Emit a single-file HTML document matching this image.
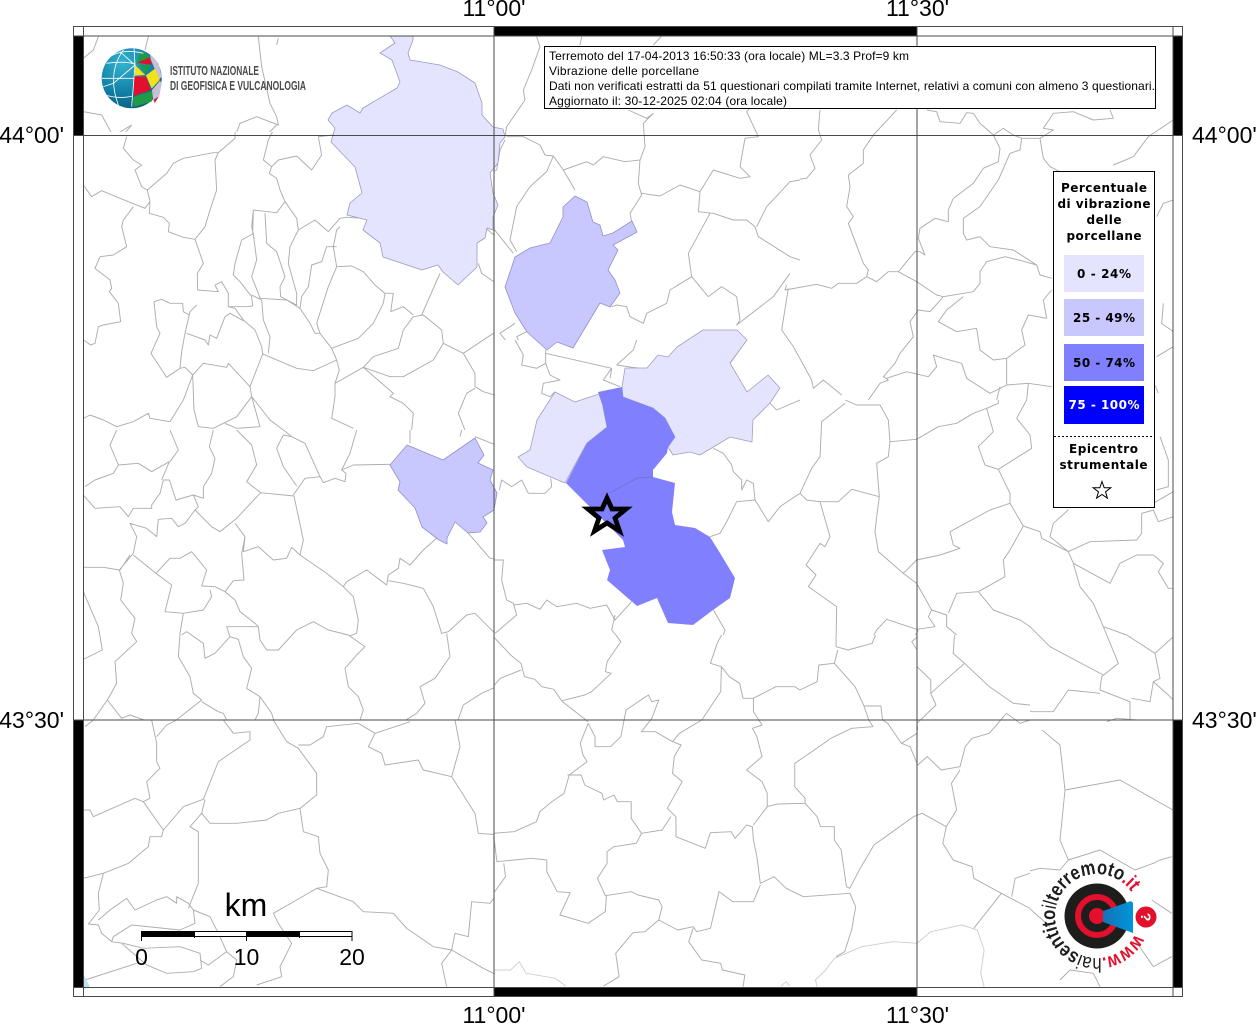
<!DOCTYPE html>
<html><head><meta charset="utf-8"><title>Vibrazione delle porcellane</title>
<style>
html,body{margin:0;padding:0;background:#fff}
svg{display:block}
.b path{fill:none;stroke:#adadad;stroke-width:.95;vector-effect:non-scaling-stroke;stroke-linejoin:round}
.l{font-family:"Liberation Sans",sans-serif;font-size:23px;fill:#000}
.d{font-family:"DejaVu Sans",sans-serif;font-weight:bold;font-size:12px;text-anchor:middle;fill:#000}
.i{font-family:"Liberation Sans",sans-serif;font-size:12px;fill:#000}
.g{font-family:"Liberation Sans Narrow","Liberation Sans",sans-serif;font-size:12.5px;font-weight:bold;fill:#4a4a4a}
</style></head><body>
<svg width="1256" height="1024" viewBox="0 0 1256 1024" xmlns="http://www.w3.org/2000/svg">
<defs>
<clipPath id="m"><rect x="84" y="36" width="1089" height="951"/></clipPath>
<clipPath id="c1"><rect x="84" y="36" width="216" height="96"/></clipPath>
<clipPath id="c4"><rect x="300" y="36" width="500" height="96"/><rect x="494" y="132" width="306" height="208"/></clipPath>
<clipPath id="c6"><rect x="84" y="132" width="410" height="298"/></clipPath>
<clipPath id="c7"><rect x="84" y="430" width="410" height="290"/></clipPath>
<clipPath id="c8"><rect x="84" y="720" width="410" height="268"/></clipPath>
<clipPath id="c5"><rect x="494" y="340" width="306" height="295"/></clipPath>
<clipPath id="c9"><rect x="494" y="635" width="536" height="353"/></clipPath>
<clipPath id="c10"><rect x="800" y="36" width="373" height="364"/><rect x="780" y="285" width="20" height="115"/></clipPath>
<clipPath id="c11"><rect x="800" y="400" width="373" height="235"/><rect x="1030" y="635" width="143" height="95"/></clipPath>
<clipPath id="c2"><rect x="1030" y="730" width="143" height="258"/></clipPath>
<radialGradient id="gl" cx=".35" cy=".25" r=".85"><stop offset="0" stop-color="#35b4d0"/><stop offset=".6" stop-color="#0f7da3"/><stop offset="1" stop-color="#0a5878"/></radialGradient>
<linearGradient id="co" x1="0" y1="0" x2="1" y2="0"><stop offset="0" stop-color="#1572b8"/><stop offset="1" stop-color="#0095da"/></linearGradient>
<path id="arc" d="M1135 934A42 42 0 1 1 1131.800 892.500"/>
</defs>
<rect width="1256" height="1024" fill="#fff"/>
<g clip-path="url(#m)">
<g class="b">
<g clip-path="url(#c6)"><g transform="translate(70 130) scale(.33333)"><path d="M170 20 160 55 190 90 215 105 195 120 215 170 232 180 290 130 310 100 340 85 430 68 445 68 495 25 495 0M40 165 65 200 95 182 150 205 225 235 240 215 232 180M445 68 435 90 440 180 420 240 405 290 375 328 340 322 295 305 298 280 280 262 238 250 240 215M190 230 160 270 155 290 170 350 130 375 90 380 75 415 120 450 125 475 118 485 145 520 152 575 100 585 85 590 75 640 62 645 40 630M375 328 400 400 382 430 383 480 445 485 435 465 455 455 475 490 475 530 530 530 548 528 545 500 510 455 490 435 495 400 515 330 548 312 550 240 620 248 645 215 630 180 620 145 598 130 605 110 580 90 595 30 610 0M605 110 625 90 680 78 725 120 755 75 745 20 790 15M645 215 680 265 685 300 735 270 775 305 810 265 830 262 885 265M550 240 545 290 550 312 560 390 545 440 565 490 570 505 650 510 690 535 720 580 735 610 750 610 740 580 775 470 800 410 790 350 800 300 810 290M585 250 590 340 620 365 645 440 630 470 632 500 680 525 680 490 655 400 660 350 685 300M800 350 770 350 755 395 725 405 715 470 695 500 690 535M800 410 845 408 880 425 915 465 945 490 940 520 910 580 865 625 785 655 750 610M545 495 575 510 580 570 600 620 595 670M475 530 495 535 520 570 555 600 575 650 578 672 540 770M380 525 360 545 345 610 335 665 330 715M350 610 405 630 415 645 420 615 440 625 465 560 480 550 520 572M252 515 275 508 300 520 338 520 340 545 358 555M252 515 260 590 270 610 243 670 290 742 330 715 345 712 368 735 400 700 470 712 475 700 540 770 545 800 500 860 430 895 385 890 372 840 368 735M368 735 340 810 300 875 240 865 235 850 190 875 140 890 100 870 60 855 40 865M578 672 680 715 730 722 800 690 785 655M800 690 808 720 795 760 795 800 785 865 850 895M795 760 880 712 910 680 985 655 1000 600 1030 560 1060 555 1115 600 1120 640 1090 690 1000 740 960 740 880 712M1120 640 1180 670 1215 730 1215 770 1240 785 1290 800M1215 775 1190 790 1165 850 1185 900M880 712 970 790 960 800 1000 820 1030 850 1025 900M1055 555 1110 430M945 490 970 490 962 545 1000 530 1030 555M1180 670 1225 640 1270 610 1290 615M1225 400 1235 430 1290 468M1248 295 1290 330M545 800 570 890 500 895 465 880M545 800 600 870 640 900"/></g></g>
<g clip-path="url(#c7)"><g transform="translate(70 430) scale(.33333)"><path d="M140 0 120 45 145 105 205 100 245 125 298 95 275 150M145 105 130 130 75 150 45 170M300 0 325 60 300 95M430 0 418 50 435 85 425 130 400 170 400 205 370 195 318 210 298 150 280 150 270 190 245 225 245 235 190 235 175 260 150 230 75 235 40 195M370 195 385 230 375 240 345 280 325 290 305 265 265 268 260 320 230 295 180 280 200 320 190 370 148 420 100 412 40 412M500 0 545 45 560 105 530 155 572 188 500 265 450 305 425 290 375 240M572 188 672 198 700 330 690 375 665 352 650 385 610 390 565 350 520 365 525 320 495 280M670 195 705 145 750 140 760 158 795 145 825 155 828 130 815 120 850 105 960 103M750 140 705 40 665 20 640 15 620 55 640 110 680 168M640 0 665 20M860 0 840 70 815 120M525 320 515 370 522 450 490 452 465 485 435 470 395 468 410 420 365 365 330 385 300 385 258 430 305 465 285 545 340 550 400 540 425 500 420 480M190 375 258 430M180 375 150 420M148 420 160 460 152 510 195 565 185 610 200 635 135 695 140 760 112 810 70 870M112 810 155 865 180 855 250 880 245 900M40 485 85 590 97 660 40 688M340 550 330 610 325 680 360 740 370 790 395 810 325 865 285 900M335 615 350 605 400 640 405 685 435 670 480 620 470 590 565 590 570 630 590 660 625 660 680 600 730 575 775 600 835 615 885 650 860 675 825 715 835 770 865 800 880 840 860 900M465 485 495 510 510 545 555 580 565 590M480 620 505 628 520 680 545 715 530 775 570 800 605 850 620 900M395 815 445 845 460 850 480 890M570 800 565 850 540 900M690 375 770 430 820 470 850 500 865 570 860 610 840 617M820 470 830 455 890 420 950 465 955 435 985 415 990 385 1020 405 1060 360 1105 320M955 452 1000 460 1060 475 1090 530 1115 610 1135 605 1190 555 1215 550 1270 605 1290 600M1130 610 1140 680 1095 745 1050 770 1065 820 1040 850 960 900M1195 310 1260 385 1290 388M1020 0 1020 40M1175 0 1170 20M1215 20 1290 50M1155 895 1180 825 1235 790 1290 765M1270 605 1290 640"/></g></g>
<g clip-path="url(#c8)"><g transform="translate(70 720) scale(.33333)"><path d="M45 20 70 0M245 0 260 70 260 125 270 145 230 185 240 235 220 245 195 235 70 290 60 270 40 270M220 245 280 330 340 260 400 238 435 150 445 125 540 60 540 35 490 40 460 0M260 50 290 15 320 0M280 330 275 350 240 350 235 380 175 430 100 460 40 475M100 460 85 520 88 570 55 612 85 615 95 640 125 665 160 670 220 685 330 680 390 700 395 745 370 755 290 760 230 735 155 670M85 600 120 570 170 535 195 570 260 540 290 530 320 550 320 530 355 550 370 570 375 610 330 630 185 615 130 650 125 665M370 570 420 590 445 640 470 695 415 735 390 720M470 695 500 720 490 770 450 800M355 565 385 490 385 335 360 320 395 280 420 310 500 310 590 300 625 280 690 265 740 225 740 160 685 85 650 65 610 0M395 280 405 238M685 75 720 75 760 50 770 20 865 10 915 40 1020 5M915 40 895 80 935 100 945 135 1045 120 1060 150 1145 170 1170 80 1155 0M690 265 700 335 745 350 750 400 775 450 770 500 740 505 680 540 610 580 625 610 665 670 630 740 635 770 560 795M740 505 850 545 880 575 970 580 1010 625 1090 680 1145 690 1155 640 1195 650 1205 545 1260 550 1290 510M1145 170 1215 280 1225 340 1290 345M1145 690 1115 730 1130 800M1145 690 1240 745 1290 770M1270 350 1290 430M45 780 200 730"/></g></g>
<g clip-path="url(#c9)"><g transform="translate(490 630) scale(.34435 .33333)"><path d="M10 20 60 75 90 100 100 140 130 148 150 170 185 178 210 215 285 275M0 180 30 145 90 120M355 0 380 35 340 95 335 125 352 130 295 185 275 195 210 212M285 280 262 340 270 375 282 395 230 435 215 490 180 515 145 545 135 575 70 605 10 610M285 280 305 320 305 350 350 350 380 320 395 240 460 195 470 215 490 210 470 265 440 305 480 305 530 335 555 345 535 380 530 430 558 455 515 535 540 560 540 620 625 655 640 608 700 605 712 625 745 585 762 590 765 630 775 680 785 760 825 740 860 775 910 800 1045 790 1062 830 1050 900 1030 965 1005 980M530 335 550 310 615 270 670 185 672 110 640 100 660 40 680 0M672 110 695 140 725 160 735 205 765 205 830 170 885 170 900 180 950 155 955 105 1000 100 1060 170 1085 225 1100 270 1112 290 1050 295 990 325 935 365 885 400 885 470 915 505 915 520 835 522 805 530 765 585M765 205 765 245 790 285 762 295 775 320 790 380 745 420 790 455 805 490 805 530M1005 0 1005 50 1040 60 1110 40 1125 0M1010 60 1000 100M1085 228 1135 228 1140 270 1155 280 1195 340 1240 310M1195 340 1220 350 1242 405 1270 380 1310 420 1365 410 1380 350 1400 325 1450 310 1500 250 1540 280 1568 270M1242 20 1225 35 1240 60 1240 110 1280 150 1280 190 1345 130 1378 100 1450 170 1520 220 1568 225M1350 0 1345 70 1378 100M1280 190 1295 225 1240 280 1242 300M915 520 950 560 960 590 1000 590 1000 630 1020 660 1035 770 1045 775 1075 715 1115 645 1230 560 1255 550 1325 590 1315 640 1345 690 1400 710 1405 745 1485 790 1568 835M1365 420 1340 460 1355 540 1325 590M225 435 265 435 275 465 325 490 330 510 360 495 370 515 410 515 410 565 440 610 500 600 525 560M440 610 425 640 360 650 340 665 340 700 312 745 335 797 410 785 430 795 490 810 500 830 490 870 450 905 415 908 365 970 375 1040 330 1068M10 610 20 695 120 685 165 690 165 725 195 785 233 788 203 855 285 880 335 845 338 797M40 700 45 740 10 790M490 870 545 900 590 890 600 905 640 895 655 830 665 785 705 815 765 815 785 765M590 895 577 935 615 990 670 1000 675 1020 740 1035 735 1070M1405 895 1485 790M1515 800 1525 745 1568 730"/><path style="stroke:#cfcfcf" d="M1000 985 1080 950 1170 935 1240 940 1280 905 1370 885 1415 900 1435 960 1425 1030 1435 1070M10 1020 60 1020 85 995 105 1030 190 1045 220 1068M1000 985 975 1020 945 1050 950 1070M845 1068 860 1055 870 1068"/></g></g>
<g clip-path="url(#c10)"><g transform="translate(780 100) scale(.33333)"><path d="M120 30 115 90 125 120 90 165 105 205 80 235 40 240 0 280M350 30 280 105 250 150 250 190 205 225 210 260 200 320 220 350 205 370 250 490 265 510 260 530 290 545 325 515 355 515 410 545 470 585 490 590 580 575 600 550 600 515 620 485 675 470 735 485 770 495 780 525 815 535M355 515 405 455 420 455 435 465 415 415 420 385 465 355 505 365 505 330 520 295 580 250 610 205 655 185 660 145 640 105 670 85 700 105 725 115 780 115 790 175 810 200 870 230M440 30 470 35 480 65 540 70 560 38 580 40 600 70 640 105M725 115 720 150 690 160 655 240 600 320 550 355 550 400 560 420 600 410 630 440 700 450 770 495M780 115 820 90 790 85 820 40 880 35 940 60 1000 55 990 30M1000 195 1060 170 1105 110 1180 60M0 480 40 490 15 570 110 553 155 565 175 550 230 550 260 530M25 565 5 690 40 740 95 840 100 865 130 840 185 885M490 590 450 635 415 630 390 665 400 710 360 760 345 790 310 830 325 840 300 850 265 900M550 590 500 630 475 665 530 695 590 685 600 750 640 780 680 775 735 735 725 690 745 645 800 655 790 600 815 570M680 775 680 855 630 880 560 835 545 790 490 775 460 765 470 800 445 830 380 815 320 835M680 855 745 850 815 860M745 850 740 900M660 860 650 900M1180 300 1150 310 1130 350M1150 610 1145 670 1180 695M1130 770 1180 740M1125 855 1135 880"/></g></g>
<g clip-path="url(#c11)"><g transform="translate(740 400) scale(.33333)"><path d="M110 30 180 0M315 0 350 15 420 15 445 60 450 125 530 118 595 80 650 70 700 40 740 25 775 10 775 0M740 25 760 95 715 140 735 195 775 208 810 280 810 310 850 378 900 395 905 415 985 455 1000 490 1020 560 1060 610 1090 680 1135 790 1085 830 1080 870 1170 905 1170 960M860 0 830 55 870 105 875 145 775 208M315 10 245 65 240 170 215 205 180 280 200 300 240 305 295 305 335 268 418 290 410 350 405 395 415 455 490 520 530 550 575 630 620 645 620 680 650 705 645 765 670 795 760 860 830 910 875 935 940 935 985 870 1080 880M180 280 110 325 85 365 60 350 45 300 40 250 20 240 5 275M0 300 45 300M450 125 445 170 410 190 418 290M240 305 270 410 255 440 240 430 198 495 228 525 205 560 290 620 288 745 300 750 385 735 410 690 440 658 530 688 585 680 565 650 575 630M810 310 750 330 630 395 640 435 660 445 600 465 530 480 490 520M850 378 810 450 790 480 795 530 715 575 650 580 625 640M715 575 760 630 840 660 870 680 930 740 1090 825M985 455 1050 425 1190 420 1205 400 1205 340 1240 330 1255 365 1300 350M985 455 930 410 940 370 985 330M1000 490 1110 550 1140 490 1190 465 1240 465 1270 490 1255 515 1285 565 1300 565M1090 680 1160 705 1245 760 1260 835 1240 845 1230 905 1175 895M1245 760 1300 710M1240 845 1290 890 1300 900M300 750 275 790 240 800 230 835 180 870 165 855 100 880 55 885 35 895 0 880M275 790 350 870 380 955M35 895 60 960M530 740 515 725 535 690M530 750 530 790 570 850 570 875 670 795M570 875 585 915 540 965M365 915 425 920 430 960M1260 110 1285 180 1285 260 1250 270M1300 275 1240 310M750 960 800 940 830 960M1100 965 1130 955 1190 960"/></g></g>
<g clip-path="url(#c5)"><g transform="translate(380 340) scale(.33333)"><path d="M405 0 430 45 425 75 470 85 497 70 497 30M497 40 695 85 670 120 720 140M497 70 510 105 540 120 490 130 485 160 510 170 525 155M710 75 760 30 770 0M695 85 690 115M710 75 800 88M358 450 365 420 395 440 425 420 445 460 495 460 515 440 512 415M1000 325 1030 340 1055 375 1060 395 1085 420 1085 450 1100 420 1120 430 1125 480 1070 485 1040 545 1020 580 990 590M1125 480 1165 545 1200 500 1260 460M1050 70 1100 0M1190 210 1260 180M1170 190 1190 210M335 660 370 660 365 720 380 780 400 790 410 825 345 880M400 795 440 790 480 808 500 780 530 800 590 790 630 805 680 795 705 840 755 785M705 825 695 870 720 900M1000 810 1035 870 1025 900"/></g></g>
<g clip-path="url(#c4)"><g transform="translate(300 30) scale(.33333)"><path d="M710 20 720 50 695 120 670 180 675 210 620 290 615 320M845 20 840 45M1085 18 1060 45M580 595 640 670M620 320 670 320 720 345 735 375 760 378 790 420 825 480M615 330 600 360 590 420 570 430M760 378 740 425 690 470 650 530 630 630 650 665M790 420 860 395 880 405 910 380 975 395 1020 390 1035 350 1030 280 1060 250 1040 265 985 240M1020 390 1015 460 1025 495 990 550 995 575M1025 490 1080 498 1140 465 1200 485 1195 545 1240 550 1300 570 1340 570 1365 590 1375 620 1470 680 1500 690M1200 485 1240 420 1320 445 1350 440 1320 410 1335 325 1375 320 1340 245 1350 235M1370 590 1400 530 1470 455 1500 450M1165 670 1175 740 1225 800 1265 770 1310 800 1320 870 1310 885 1420 800 1470 730M1175 740 1110 780 1100 820 1040 850 1030 880 990 860 980 830 950 825 935 830M1165 670 1230 550M580 770 540 710M645 880 600 910 640 960M680 905 650 920 670 960"/></g></g>
<g clip-path="url(#c1)"><g transform="translate(60 0) scale(.33333)"><path d="M115 110 100 150 70 175M265 110 255 150M595 110 605 200 630 310 650 350 655 375 590 350 540 370 525 410 490 450M655 115 650 135M70 335 125 345 155 400 165 405 215 375 190 405 205 450M650 375 625 400"/></g></g>
<g clip-path="url(#c2)"><g transform="translate(1020 840) scale(.33333)"><path d="M0 100 60 85 120 90 145 60 120 0M0 180 90 260M395 180 455 220M145 60 240 30 345 90 400 70 420 60 455 50M345 300 400 380 455 350M120 420 150 390 220 400 240 440"/></g><path d="M1030 720 1060 745 1065 790 1060 840M1065 790 1120 780 1173 810"/></g>
</g>
<g stroke-linejoin="round">
<path fill="#e4e4ff" stroke="#9a9ac0" stroke-width=".8" d="M390 36 395 43 380 53 392 60 400 82 397 88 363 108 360 113 347 105 332 113 328 120 335 128 331 142 355 167 362 193 350 203 347 215 367 220 363 230 380 243 383 257 398 262 422 270 438 265 443 272 458 285 477 267 477 243 485 238 487 228 493 230 493 217 498 205 493 193 490 173 498 163 500 143 505 137 503 129 493 127 482 115 482 103 475 83 458 72 440 65 410 60 408 53 413 40 413 36Z"/>
<path fill="#c8c8ff" stroke="#9090c8" stroke-width=".8" d="M575 196 587 202 593 222 600 225 603 236 613 233 632 221 637 232 628 237 613 245 618 250 608 270 615 280 620 293 610 307 600 303 573 348 557 342 547 350 527 332 515 313 505 287 515 257 530 248 550 243 563 217 563 207Z"/>
<path fill="#e4e4ff" stroke="#a0a0c0" stroke-width=".8" d="M747 340 730 363 747 392 768 375 780 388 770 403 753 420 752 442 730 437 700 455 690 452 673 455 668 447 675 437 665 418 653 408 623 397 622 387 625 368 647 368 658 355 668 357 677 347 703 330 737 330Z"/>
<path fill="#e4e4ff" stroke="#a0a0c0" stroke-width=".8" d="M602 393 575 402 555 392 537 420 530 450 518 457 527 467 565 483 587 443 607 427 603 407Z"/>
<path fill="#8080ff" d="M598 392 622 387 623 397 653 408 665 418 675 437 668 447 667 453 653 470 653 477 675 483 672 512 675 525 695 528 710 537 720 553 735 578 730 598 713 610 693 625 668 623 657 598 637 606 607 580 610 570 602 550 625 547 623 540 566 483 587 443 607 427 603 407Z"/>
<path fill="none" stroke="#7070c8" stroke-width=".8" d="M610 493 637 478 653 477"/>
<path fill="#c8c8ff" stroke="#9090c8" stroke-width=".8" d="M407 445 443 460 475 438 484 455 478 463 493 470 490 480 497 493 494 510 483 517 487 523 480 532 468 533 455 522 447 538 447 544 439 540 422 527 415 508 398 490 400 482 390 465Z"/>
</g>
</g>
<!-- frame -->
<g fill="#000">
<rect x="74" y="36" width="10" height="100"/><rect x="74" y="720" width="10" height="267"/>
<rect x="1173" y="36" width="10" height="100"/><rect x="1173" y="720" width="10" height="267"/>
<rect x="494" y="27" width="423" height="9"/><rect x="494" y="988" width="423" height="9"/>
</g>
<g fill="none" stroke="#4a4a4a" stroke-width="1">
<rect x="73.500" y="26.500" width="1109" height="970"/>
<path d="M83.500 26V997M1173 26V997M73 36H1183M73 987.500H1183M494 26V997M917 26V997M73 135.500H1183M73 720H1183"/>
</g>
<path fill="#bfe0ee" d="M84 975 90 987H84Z"/>
<!-- star -->
<path fill="none" stroke="#000" stroke-width="4.800" stroke-linejoin="miter" d="M607 498 612 509 626 509 615 518 619.500 531 607 523 594.500 531 599 518 588 509 602 509Z"/>
<!-- labels -->
<g class="l">
<text x="494" y="16" text-anchor="middle">11°00'</text><text x="917.500" y="16" text-anchor="middle">11°30'</text>
<text x="494" y="1023" text-anchor="middle">11°00'</text><text x="917.500" y="1023" text-anchor="middle">11°30'</text>
<text x="64" y="143" text-anchor="end">44°00'</text><text x="64" y="728" text-anchor="end">43°30'</text>
<text x="1192" y="143">44°00'</text><text x="1192" y="728">43°30'</text>
</g>
<!-- INGV logo -->
<circle cx="131.700" cy="78.300" r="30" fill="url(#gl)"/>
<g transform="translate(60 40) scale(.33333)">
<path fill="#1f9a45" d="M228 70 245 33 270 50 235 72Z"/><path fill="#e30f2d" d="M232 68 270 52 275 74 255 72Z"/>
<path fill="#c9c1d3" d="M270 42 296 70 305 110 298 118 272 58Z"/><path fill="#f4e11a" d="M225 75 256 105 225 107Z"/>
<path fill="#1f9a45" d="M236 73 272 76 256 100Z"/><path fill="#f4e11a" d="M258 106 285 86 299 120 275 146Z"/>
<path fill="#e30f2d" d="M222 109 258 110 272 150 222 168Z"/><path fill="#1f9a45" d="M220 171 278 152 276 184 220 201Z"/>
<path fill="#c9c1d3" d="M276 150 300 122 305 130 298 168 280 186Z"/><path fill="#e30f2d" d="M282 178 296 170 284 190Z"/>
<path fill="none" stroke="#fff" stroke-width="2.500" d="M126 115H222M140 70Q190 62 225 72M135 165Q180 178 218 168M222 25 225 75 215 200M190 30Q140 100 175 195M180 35 225 75M150 50Q190 25 250 40M225 75 160 130 130 140"/>
</g>
<text class="g" x="170" y="75" textLength="89" lengthAdjust="spacingAndGlyphs">ISTITUTO NAZIONALE</text>
<text class="g" x="170" y="90" textLength="136" lengthAdjust="spacingAndGlyphs">DI GEOFISICA E VULCANOLOGIA</text>
<!-- info box -->
<rect x="544.500" y="46.500" width="611" height="62" fill="#fff" stroke="#000"/>
<g class="i">
<text x="549" y="60" textLength="360">Terremoto del 17-04-2013 16:50:33 (ora locale) ML=3.3 Prof=9 km</text>
<text x="549" y="75" textLength="150">Vibrazione delle porcellane</text>
<text x="549" y="90" textLength="606">Dati non verificati estratti da 51 questionari compilati tramite Internet, relativi a comuni con almeno 3 questionari.</text>
<text x="549" y="105" textLength="238">Aggiornato il: 30-12-2025 02:04 (ora locale)</text>
</g>
<!-- legend -->
<rect x="1053.500" y="171.500" width="101" height="336" fill="#fff" stroke="#000"/>
<rect x="1064" y="255" width="80" height="37" fill="#e4e4ff"/><rect x="1064" y="299" width="80" height="37" fill="#c8c8ff"/>
<rect x="1064" y="344" width="80" height="37" fill="#8080ff"/><rect x="1064" y="386" width="80" height="38" fill="#00f"/>
<path stroke="#000" stroke-dasharray="2 2" d="M1054 436.500H1154"/>
<g class="d">
<text x="1104" y="192" textLength="86">Percentuale</text>
<text x="1104" y="208" textLength="93">di vibrazione</text>
<text x="1104" y="224" textLength="35">delle</text>
<text x="1104" y="240" textLength="75">porcellane</text>
<text x="1104" y="278" textLength="54">0 - 24%</text>
<text x="1104" y="322" textLength="62">25 - 49%</text>
<text x="1104" y="367" textLength="62">50 - 74%</text>
<text x="1104" y="409" textLength="71" style="fill:#fff">75 - 100%</text>
<text x="1103.500" y="453" textLength="69">Epicentro</text>
<text x="1103.500" y="469" textLength="88">strumentale</text>
</g>
<path fill="none" stroke="#000" stroke-width="1" d="M1102 481.500 1104.200 487.800 1110.800 487.800 1105.500 491.800 1107.400 498.200 1102 494.500 1096.600 498.200 1098.500 491.800 1093.200 487.800 1099.800 487.800Z"/>
<!-- scale bar -->
<rect x="141.500" y="931.500" width="210.500" height="5" fill="#fff" stroke="#000"/>
<rect x="141.500" y="931" width="53" height="6" fill="#000"/><rect x="246.500" y="931" width="53" height="6" fill="#000"/>
<path stroke="#000" fill="none" d="M141.500 931V941M194.500 931V938M246.500 931V941M299.500 931V938M352 931V941"/>
<g class="l" text-anchor="middle">
<text x="141.500" y="965">0</text><text x="246.500" y="965">10</text><text x="352" y="965">20</text>
<text x="246" y="916" style="font-size:32px">km</text>
</g>
<!-- haisentito logo -->
<circle cx="1097" cy="916" r="32.500" fill="#1d1d1b"/>
<circle cx="1097" cy="916" r="19" fill="none" stroke="#e30f2d" stroke-width="6"/>
<circle cx="1097" cy="916" r="8" fill="#e30f2d"/>
<path fill="url(#co)" d="M1103 911 1131 901 1133 903V933L1103 922Z"/>
<circle cx="1146" cy="917" r="10.500" fill="#e30f2d"/>
<text x="1146" y="917" font-family="'Liberation Sans',sans-serif" font-weight="bold" font-size="14" fill="#fff" text-anchor="middle" transform="rotate(90 1146 917) translate(0 5)">?</text>
<text font-family="'Liberation Sans',sans-serif" font-size="20" fill="#1d1d1b"><textPath href="#arc" textLength="219" lengthAdjust="spacingAndGlyphs"><tspan fill="#e30f2d" font-weight="bold">www.</tspan>hai<tspan font-weight="bold">sentito</tspan>il<tspan font-weight="bold">terremoto</tspan><tspan fill="#e30f2d" font-weight="bold">.it</tspan></textPath></text>
</svg>
</body></html>
